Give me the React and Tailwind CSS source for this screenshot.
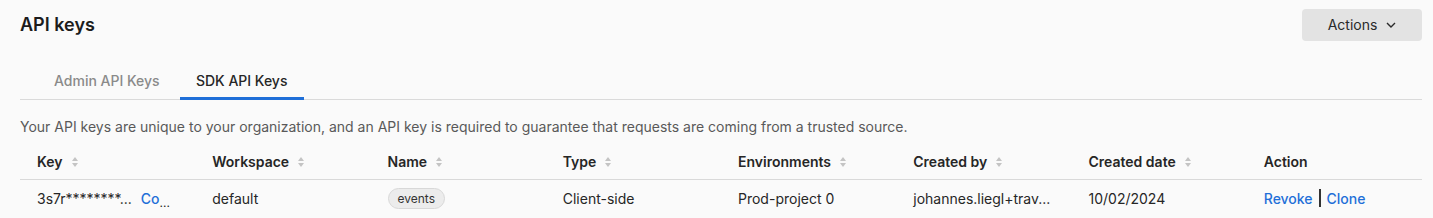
import React from "react";

const SortIcon = () => (
  <svg width="8" height="12" viewBox="0 0 8 12" className="ml-2 inline-block">
    <path d="M4 1 L7 5 H1 Z" fill="#c4c4c4" />
    <path d="M4 11 L7 7 H1 Z" fill="#c4c4c4" />
  </svg>
);

const columns = [
  { label: "Key", sort: true },
  { label: "Workspace", sort: true },
  { label: "Name", sort: true },
  { label: "Type", sort: true },
  { label: "Environments", sort: true },
  { label: "Created by", sort: true },
  { label: "Created date", sort: true },
  { label: "Action", sort: false },
];

const App = () => {
  return (
    <div
      className="w-[1433px] h-[218px] bg-[#fafafa] pl-5 pr-[11px] overflow-hidden text-[#262626]"
      style={{ fontFamily: "Inter, 'Noto Sans', sans-serif" }}
    >
      {/* Header */}
      <div className="flex items-center justify-between pt-[9px] h-[40px]">
        <h1 className="text-[18px] font-semibold text-[#1c1c1c] leading-none">API keys</h1>
        <button className="flex items-center justify-center gap-[9px] w-[120px] h-[32px] rounded-[4px] bg-[#e3e3e3] text-[14px] text-[#2a2a2a]">
          Actions
          <svg width="10" height="6" viewBox="0 0 10 6" fill="none">
            <path d="M1 1 L5 5 L9 1" stroke="#2a2a2a" strokeWidth="1.4" />
          </svg>
        </button>
      </div>

      {/* Tabs */}
      <div className="flex border-b border-[#dadada] mt-[21px] h-[39px]">
        <div className="w-[34px]" />
        <div className="flex items-center text-[14px] font-medium text-[#8a8a8a] pr-[20px]">Admin API Keys</div>
        <div className="flex items-center justify-center w-[124px] text-[14px] font-medium text-[#262626] border-b-[3px] border-[#1f6fd8] -mb-[1px] pt-[2px]">
          SDK API Keys
        </div>
      </div>

      <p className="text-[14px] text-[#595959] mt-[18px] leading-[18px]">
        Your API keys are unique to your organization, and an API key is required to guarantee that requests are coming from a trusted source.
      </p>

      {/* Table */}
      <div className="mt-[8px]">
        <div className="grid grid-cols-8 h-[36px] border-b border-[#d9d9d9] items-center">
          {columns.map((c) => (
            <div key={c.label} className="pl-[17px] flex items-center text-[14px] font-semibold text-[#262626]">
              {c.label}
              {c.sort && <SortIcon />}
            </div>
          ))}
        </div>
        <div className="grid grid-cols-8 h-[36px] items-center text-[14px] text-[#262626]">
          <div className="pl-[17px] flex items-center whitespace-nowrap">
            <span>3s7r********...</span>
            <span className="ml-[9px] text-[#1f6fd8] font-medium">Co</span>
            <span className="mt-[10px] text-[12px] leading-none">...</span>
          </div>
          <div className="pl-[17px]">default</div>
          <div className="pl-[17px]">
            <span className="inline-flex items-center h-[21px] px-[9px] rounded-full bg-[#ececec] border border-[#d8d8d8] text-[12px] text-[#333]">
              events
            </span>
          </div>
          <div className="pl-[17px]">Client-side</div>
          <div className="pl-[17px]">Prod-project 0</div>
          <div className="pl-[17px] whitespace-nowrap">johannes.liegl+trav...</div>
          <div className="pl-[17px]">10/02/2024</div>
          <div className="pl-[17px] flex items-center font-medium text-[#1f6fd8]">
            Revoke
            <span className="mx-[6px] w-[2px] h-[18px] bg-[#333]" />
            Clone
          </div>
        </div>
      </div>
    </div>
  );
};

export default App;
